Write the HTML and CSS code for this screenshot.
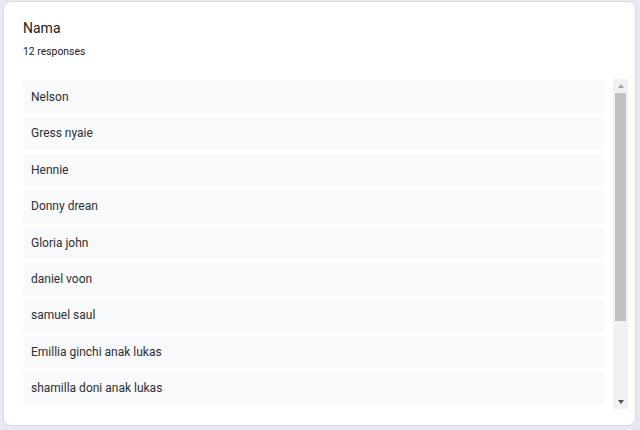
FILE: index.html
```html
<!DOCTYPE html>
<html lang="en">
<head>
    <meta charset="UTF-8">
    <meta name="viewport" content="width=device-width, initial-scale=1.0">
    <title>Nama - responses</title>
    <link rel="stylesheet" href="styles.css">
</head>
<body>
    <div class="card">
        <div class="question">Nama</div>
        <div class="count">12 responses</div>

        <div class="answers-box">
            <!-- only the first 9 answers are in view -->
            <div class="answers">
                <div class="answer">Nelson</div>
                <div class="answer">Gress nyaie</div>
                <div class="answer">Hennie</div>
                <div class="answer">Donny drean</div>
                <div class="answer">Gloria john</div>
                <div class="answer">daniel voon</div>
                <div class="answer">samuel saul</div>
                <div class="answer">Emillia ginchi anak lukas</div>
                <div class="answer">shamilla doni anak lukas</div>
            </div>

            <!-- drawn scrollbar, the headless browser hides real ones -->
            <div class="scrollbar">
                <div class="sb-button"><span class="arrow-up"></span></div>
                <div class="sb-track">
                    <div class="sb-thumb"></div>
                </div>
                <div class="sb-button"><span class="arrow-down"></span></div>
            </div>
        </div>
    </div>
</body>
</html>
```

FILE: styles.css
```css
html, body {
    height: 100%;
}
body {
    margin: 0;
    padding: 1px 4px 4px 3px;
    box-sizing: border-box;
    background-color: #e9e7f1;
    font-family: Roboto, Arial, sans-serif;
    color: #202124;
}
.card {
    height: 100%;
    box-sizing: border-box;
    background-color: #fff;
    border: 1px solid #dadce0;
    border-radius: 8px;
    padding: 18px 7px 0 19px;
}
.question {
    font-size: 14px;
    line-height: 17px;
}
.count {
    font-size: 10.4px;
    line-height: 13px;
    margin-top: 8px;
}
.answers-box {
    display: flex;
    margin-top: 21px;
    height: 330px;
}
.answers {
    flex: 1;
    overflow: hidden;
    padding: 2px 9px 0 0;
}
.answer {
    background-color: #f8f9fa;
    border-radius: 2px;
    height: 32.4px;
    line-height: 32px;
    padding-left: 8px;
    margin-bottom: 4px;
    font-size: 12px;
    color: #2d2f33;
}

.scrollbar {
    width: 15px;
    display: flex;
    flex-direction: column;
    background-color: #f1f1f1;
}
.sb-button {
    height: 14px;
    display: flex;
    align-items: center;
    justify-content: center;
}
.arrow-up {
    border-left: 3.5px solid transparent;
    border-right: 3.5px solid transparent;
    border-bottom: 4px solid #a3a3a3;
}
.arrow-down {
    border-left: 3.5px solid transparent;
    border-right: 3.5px solid transparent;
    border-top: 4px solid #505050;
}
.sb-track {
    flex: 1;
    padding: 0 2px;
}
.sb-thumb {
    height: 228px;
    background-color: #c1c1c1;
}
```
